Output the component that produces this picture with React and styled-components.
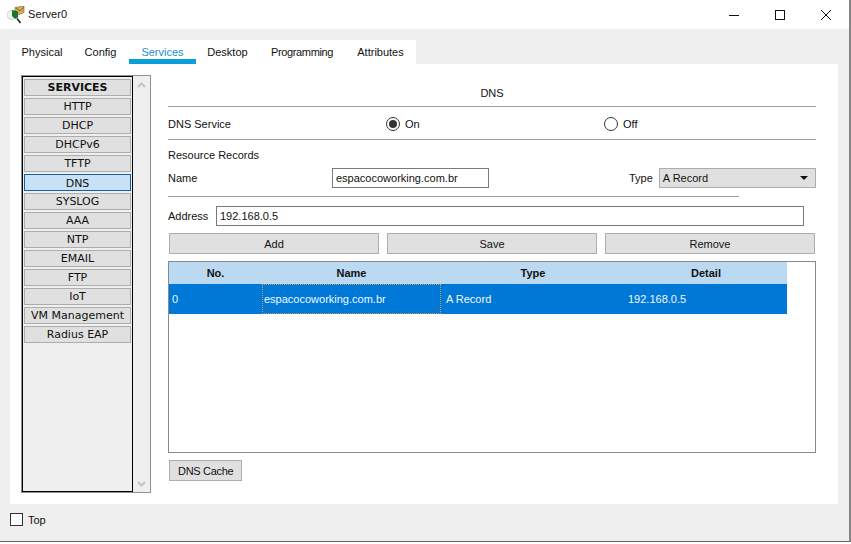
import styled, { createGlobalStyle } from "styled-components";

const GlobalStyle = createGlobalStyle`
  html, body {
    margin: 0;
    background: #ffffff;
  }
  * {
    box-sizing: border-box;
  }
`;

const Window = styled.div`
  width: 851px;
  height: 542px;
  display: flex;
  flex-direction: column;
  border-right: 2px solid #858585;
  border-bottom: 1px solid #666;
  box-shadow: 0 2px 0 #d2d2d2;
  background: #efefef;
  font-family: "Liberation Sans", Arial, sans-serif;
  font-size: 11px;
  color: #111;
`;

const TitleBar = styled.div`
  height: 29px;
  flex: none;
  display: flex;
  align-items: center;
  background: #fff;
  padding-left: 7px;
  font-size: 11px;
  letter-spacing: 0.1px;
`;

const TitleText = styled.span`
  margin-left: 3px;
  padding-bottom: 1px;
  flex: 1;
`;

const WinButton = styled.div`
  width: 46px;
  height: 29px;
  display: flex;
  align-items: center;
  justify-content: center;
`;

const Main = styled.div`
  margin: 11px 11px 0 10px;
  display: flex;
  flex-direction: column;
`;

const Tabs = styled.div`
  width: 406px;
  height: 24px;
  display: flex;
  background: #fff;
  padding-left: 2px;
`;

const Tab = styled.div`
  width: ${(p) => p.$w}px;
  height: 24px;
  text-align: center;
  line-height: 24px;
  letter-spacing: ${(p) => p.$spacing || 0}px;
  color: ${(p) => (p.$active ? "#1a8fd0" : "#111")};
  border-bottom: 5px solid ${(p) => (p.$active ? "#0a9fdb" : "transparent")};
`;

const Panel = styled.div`
  height: 440px;
  background: #fff;
  display: flex;
  padding: 11px 22px 11px 11px;
`;

const Sidebar = styled.div`
  width: 130px;
  flex: none;
  display: flex;
  border: 1px solid #8a9299;
`;

const ServiceList = styled.div`
  width: 111px;
  flex: none;
  display: flex;
  flex-direction: column;
  gap: 2px;
  padding: 2px 1px;
  background: #efefef;
  border: 1px solid #000;
  font-family: "DejaVu Sans", Verdana, sans-serif;
`;

const ServiceItem = styled.div`
  height: 17px;
  flex: none;
  line-height: ${(p) => (p.$selected ? "17px" : "15px")};
  text-align: center;
  white-space: nowrap;
  background: ${(p) => (p.$selected ? "#c9e1f6" : "#e0e0e0")};
  border: 1px solid ${(p) => (p.$selected ? "#16609f" : "#adadad")};
  font-weight: ${(p) => (p.$head ? 700 : 400)};
`;

const Scrollbar = styled.div`
  flex: 1;
  display: flex;
  flex-direction: column;
  justify-content: space-between;
  align-items: center;
  padding: 6px 0 5px;
  background: #efefef;
`;

const Content = styled.div`
  flex: 1;
  margin-left: 17px;
  display: flex;
  flex-direction: column;
`;

const Heading = styled.div`
  height: 32px;
  line-height: 36px;
  text-align: center;
  border-bottom: 1px solid #a0a0a0;
`;

const Row = styled.div`
  display: flex;
  align-items: center;
  height: ${(p) => p.$h}px;
`;

const ServiceRow = styled(Row)`
  padding-top: 2px;
  border-bottom: 1px solid #a0a0a0;
`;

const Label = styled.span`
  width: ${(p) => (p.$w ? `${p.$w}px` : "auto")};
  flex: none;
`;

const Radio = styled.span`
  width: 14px;
  height: 14px;
  flex: none;
  border: 1px solid #333;
  border-radius: 50%;
  display: flex;
  align-items: center;
  justify-content: center;
  margin-right: 5px;
  &::after {
    content: "";
    display: ${(p) => (p.$on ? "block" : "none")};
    width: 8px;
    height: 8px;
    border-radius: 50%;
    background: #333;
  }
`;

const RadioOption = styled.div`
  width: ${(p) => p.$w}px;
  display: flex;
  align-items: center;
`;

const SectionLabel = styled.div`
  height: 28px;
  line-height: 30px;
`;

const TextField = styled.div`
  height: 20px;
  line-height: 18px;
  flex: ${(p) => (p.$w ? "none" : 1)};
  width: ${(p) => (p.$w ? `${p.$w}px` : "auto")};
  padding-left: 3px;
  border: 1px solid #7a7a7a;
  background: #fff;
`;

const TypeSelect = styled.div`
  width: 157px;
  height: 20px;
  margin-left: 6px;
  padding: 0 7px 0 3px;
  display: flex;
  align-items: center;
  justify-content: space-between;
  background: #e0e0e0;
  border: 1px solid #adadad;
`;

const Caret = styled.span`
  width: 0;
  height: 0;
  border-left: 4px solid transparent;
  border-right: 4px solid transparent;
  border-top: 4px solid #111;
`;

const ShortRule = styled.div`
  width: 571px;
  border-top: 1px solid #a0a0a0;
  margin-top: 8px;
`;

const AddressRow = styled.div`
  display: flex;
  align-items: center;
  height: 20px;
  margin: 9px 12px 0 0;
`;

const Actions = styled.div`
  display: flex;
  gap: 8px;
  margin: 7px 1px 0 1px;
`;

const Button = styled.div`
  flex: ${(p) => (p.$auto ? "none" : 1)};
  height: 21px;
  line-height: 20px;
  padding: 0 8px;
  text-align: center;
  letter-spacing: ${(p) => (p.$auto ? "-0.3px" : "0")};
  background: #e0e0e0;
  border: 1px solid #adadad;
`;

const TableBox = styled.div`
  height: 192px;
  margin: 7px 0;
  border: 1px solid #868a8e;
  background: #fff;
`;

const TableRow = styled.div`
  width: 618px;
  display: grid;
  grid-template-columns: 93px 179px 184px 162px;
  height: ${(p) => p.$h}px;
`;

const HeadCell = styled.div`
  background: #bbdaf1;
  font-weight: 700;
  text-align: center;
  line-height: 22px;
`;

const DataCell = styled.div`
  background: #0078d7;
  color: #f2f7fc;
  border: ${(p) => (p.$focus ? "1px dotted #c9995c" : "none")};
  line-height: ${(p) => (p.$focus ? "28px" : "30px")};
  padding-left: ${(p) => (p.$focus ? "1px" : p.$pad || "3px")};
`;

const CacheRow = styled.div`
  display: flex;
  margin-left: 1px;
`;

const Footer = styled.div`
  display: flex;
  align-items: center;
  margin: 9px 0 0 10px;
  height: 13px;
`;

const CheckBox = styled.span`
  width: 13px;
  height: 13px;
  border: 1px solid #333;
  background: #fff;
  margin-right: 5px;
`;

const ServerIcon = () => (
  <svg width="18" height="18" viewBox="0 0 18 18">
    <circle cx="4.5" cy="9" r="4.5" fill="#eef2f2" stroke="#c9d0d0" />
    <path d="M10 12.5l3.5 4.5" stroke="#222" strokeWidth="1.6" />
    <path d="M8 1.5L17 0v6.5L11 9 8 6z" fill="#d9ae55" stroke="#7a5a20" strokeWidth="0.6" />
    <path d="M5 4l6 1.5v6L8 13 5 10z" fill="#17762a" />
    <path d="M9 2l4 3 4-4" fill="none" stroke="#6b4f1d" strokeWidth="0.8" />
  </svg>
);

const Minimize = () => (
  <svg width="10" height="10" viewBox="0 0 10 10">
    <path d="M0 5.5h10" stroke="#111" />
  </svg>
);

const Maximize = () => (
  <svg width="10" height="10" viewBox="0 0 10 10">
    <rect x="0.5" y="0.5" width="9" height="9" fill="none" stroke="#111" />
  </svg>
);

const Close = () => (
  <svg width="10" height="10" viewBox="0 0 10 10">
    <path d="M0 0l10 10M10 0L0 10" stroke="#111" />
  </svg>
);

const Chevron = ({ down }) => (
  <svg width="9" height="6" viewBox="0 0 9 6">
    <path d={down ? "M1 1l3.5 3.5L8 1" : "M1 5l3.5-3.5L8 5"} fill="none" stroke="#c4c4c4" strokeWidth="2" />
  </svg>
);

const tabs = [
  ["Physical", 60],
  ["Config", 57],
  ["Services", 67],
  ["Desktop", 63],
  ["Programming", 86, -0.35],
  ["Attributes", 71],
];

const services = ["HTTP", "DHCP", "DHCPv6", "TFTP", "DNS", "SYSLOG", "AAA", "NTP", "EMAIL", "FTP", "IoT", "VM Management", "Radius EAP"];

export default function App() {
  return (
    <>
      <GlobalStyle />
      <Window>
        <TitleBar>
          <ServerIcon />
          <TitleText>Server0</TitleText>
          <WinButton><Minimize /></WinButton>
          <WinButton><Maximize /></WinButton>
          <WinButton><Close /></WinButton>
        </TitleBar>
        <Main>
          <Tabs>
            {tabs.map(([name, w, spacing]) => (
              <Tab key={name} $w={w} $spacing={spacing} $active={name === "Services"}>{name}</Tab>
            ))}
          </Tabs>
          <Panel>
            <Sidebar>
              <ServiceList>
                <ServiceItem $head>SERVICES</ServiceItem>
                {services.map((s) => (
                  <ServiceItem key={s} $selected={s === "DNS"}>{s}</ServiceItem>
                ))}
              </ServiceList>
              <Scrollbar>
                <Chevron />
                <Chevron down />
              </Scrollbar>
            </Sidebar>
            <Content>
              <Heading>DNS</Heading>
              <ServiceRow $h={33}>
                <Label $w={218}>DNS Service</Label>
                <RadioOption $w={218}><Radio $on />On</RadioOption>
                <RadioOption $w={100}><Radio />Off</RadioOption>
              </ServiceRow>
              <SectionLabel>Resource Records</SectionLabel>
              <Row $h={20}>
                <Label $w={164}>Name</Label>
                <TextField $w={157}>espacocoworking.com.br</TextField>
                <Label $w={140} />
                <Label>Type</Label>
                <TypeSelect>A Record<Caret /></TypeSelect>
              </Row>
              <ShortRule />
              <AddressRow>
                <Label $w={48}>Address</Label>
                <TextField>192.168.0.5</TextField>
              </AddressRow>
              <Actions>
                <Button>Add</Button>
                <Button>Save</Button>
                <Button>Remove</Button>
              </Actions>
              <TableBox>
                <TableRow $h={22}>
                  <HeadCell>No.</HeadCell>
                  <HeadCell>Name</HeadCell>
                  <HeadCell>Type</HeadCell>
                  <HeadCell>Detail</HeadCell>
                </TableRow>
                <TableRow $h={30}>
                  <DataCell>0</DataCell>
                  <DataCell $focus>espacocoworking.com.br</DataCell>
                  <DataCell $pad="5px">A Record</DataCell>
                  <DataCell>192.168.0.5</DataCell>
                </TableRow>
              </TableBox>
              <CacheRow>
                <Button $auto>DNS Cache</Button>
              </CacheRow>
            </Content>
          </Panel>
        </Main>
        <Footer>
          <CheckBox />
          Top
        </Footer>
      </Window>
    </>
  );
}
